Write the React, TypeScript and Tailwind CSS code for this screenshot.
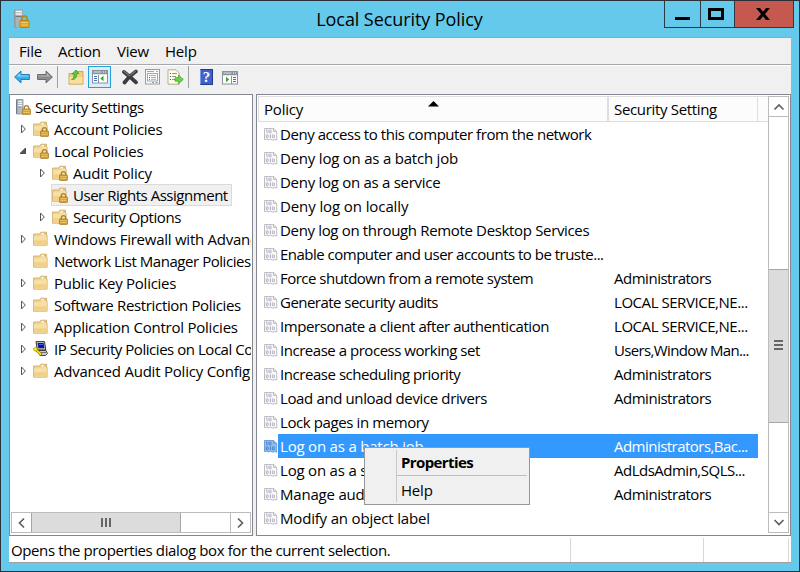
import React from "react";

type Row = { name: string; setting?: string; selected?: boolean; track: string; settingTrack?: string };
type Node = {
  label: string;
  depth: number;
  arrow?: "closed" | "open";
  icon: "server" | "folder" | "locked" | "ipsec";
  selected?: boolean;
  track: string;
};

const tree: Node[] = [
  { label: "Security Settings", depth: 0, icon: "server", track: "tracking-[-0.38px]" },
  { label: "Account Policies", depth: 1, arrow: "closed", icon: "locked", track: "tracking-[-0.27px]" },
  { label: "Local Policies", depth: 1, arrow: "open", icon: "locked", track: "tracking-[-0.2px]" },
  { label: "Audit Policy", depth: 2, arrow: "closed", icon: "locked", track: "tracking-[-0.2px]" },
  { label: "User Rights Assignment", depth: 2, icon: "locked", selected: true, track: "tracking-[-0.47px]" },
  { label: "Security Options", depth: 2, arrow: "closed", icon: "locked", track: "tracking-[-0.45px]" },
  { label: "Windows Firewall with Advanced Security", depth: 1, arrow: "closed", icon: "folder", track: "tracking-[-0.25px]" },
  { label: "Network List Manager Policies", depth: 1, icon: "folder", track: "tracking-[-0.45px]" },
  { label: "Public Key Policies", depth: 1, arrow: "closed", icon: "folder", track: "tracking-[-0.27px]" },
  { label: "Software Restriction Policies", depth: 1, arrow: "closed", icon: "folder", track: "tracking-[-0.34px]" },
  { label: "Application Control Policies", depth: 1, arrow: "closed", icon: "folder", track: "tracking-[-0.23px]" },
  { label: "IP Security Policies on Local Computer", depth: 1, arrow: "closed", icon: "ipsec", track: "tracking-[-0.46px]" },
  { label: "Advanced Audit Policy Configuration", depth: 1, arrow: "closed", icon: "folder", track: "tracking-[-0.22px]" },
];

const rows: Row[] = [
  { name: "Deny access to this computer from the network", track: "tracking-[-0.45px]" },
  { name: "Deny log on as a batch job", track: "tracking-[-0.22px]" },
  { name: "Deny log on as a service", track: "tracking-[-0.28px]" },
  { name: "Deny log on locally", track: "tracking-[-0.1px]" },
  { name: "Deny log on through Remote Desktop Services", track: "tracking-[-0.34px]" },
  { name: "Enable computer and user accounts to be truste...", track: "tracking-[-0.51px]" },
  { name: "Force shutdown from a remote system", setting: "Administrators", track: "tracking-[-0.51px]", settingTrack: "tracking-[-0.48px]" },
  { name: "Generate security audits", setting: "LOCAL SERVICE,NE...", track: "tracking-[-0.53px]", settingTrack: "tracking-[-0.45px]" },
  { name: "Impersonate a client after authentication", setting: "LOCAL SERVICE,NE...", track: "tracking-[-0.41px]", settingTrack: "tracking-[-0.45px]" },
  { name: "Increase a process working set", setting: "Users,Window Man...", track: "tracking-[-0.47px]", settingTrack: "tracking-[-0.64px]" },
  { name: "Increase scheduling priority", setting: "Administrators", track: "tracking-[-0.45px]", settingTrack: "tracking-[-0.48px]" },
  { name: "Load and unload device drivers", setting: "Administrators", track: "tracking-[-0.37px]", settingTrack: "tracking-[-0.48px]" },
  { name: "Lock pages in memory", track: "tracking-[-0.4px]" },
  { name: "Log on as a batch job", setting: "Administrators,Bac...", selected: true, track: "tracking-[-0.2px]", settingTrack: "tracking-[-0.53px]" },
  { name: "Log on as a service", setting: "AdLdsAdmin,SQLS...", track: "tracking-[-0.2px]", settingTrack: "tracking-[-0.5px]" },
  { name: "Manage auditing and security log", setting: "Administrators", track: "tracking-[-0.2px]", settingTrack: "tracking-[-0.48px]" },
  { name: "Modify an object label", track: "tracking-[-0.18px]" },
];

function Lock() {
  return (
    <g>
      <path d="M9.300 10.500V9a2.200 2.400 0 0 1 4.400 0v1.500" fill="none" stroke="#a88234" strokeWidth="1.400" />
      <rect x="7.500" y="10" width="8" height="5.400" rx="0.600" fill="#d3a136" stroke="#ad7d22" strokeWidth="0.800" />
      <path d="M8.300 11.600h6.400M8.300 13.500h6.400" stroke="#f0cf78" strokeWidth="0.700" />
    </g>
  );
}

function FolderShape() {
  return (
    <g>
      <path d="M.6 3h6.200l1-1.800h5.700v3h.6v10H.6z" fill="#f0d492" stroke="#cda661" strokeWidth="0.800" />
      <path d="M8.500 2.200h4.200v1.100H8.500z" fill="#fff" />
      <path d="M11.200 2.200h1.600v1h-1.600z" fill="#6aa5cf" />
      <path d="M1 5.200h6.800l1.200-1h4.600v9.500H1z" fill="#f7e0a5" />
      <path d="M1 9.200h12.600v4.500H1z" fill="#f1d18a" />
    </g>
  );
}

function TreeIcon({ kind }: { kind: Node["icon"] }) {
  return (
    <svg width="16" height="16" viewBox="0 0 16 16" className="shrink-0">
      {kind === "server" && (
        <g>
          <path d="M1.500.5h6.500v14.500h-6.500z" fill="#b4bcc2" stroke="#87929a" strokeWidth="0.800" />
          <path d="M1 .8h1.300v14H1z" fill="#6f7d88" />
          <path d="M3.200 2.500h4M3.200 4.500h4M3.200 6.500h4" stroke="#f3f6f8" strokeWidth="1" />
          <path d="M3.500 8.500h2" stroke="#63ba52" strokeWidth="1" />
          <Lock />
        </g>
      )}
      {(kind === "folder" || kind === "locked") && <FolderShape />}
      {kind === "locked" && <Lock />}
      {kind === "ipsec" && (
        <g>
          <path d="M3 .6h8.500l1.300 8.400H4.300z" fill="#c6c6c6" stroke="#222" strokeWidth="0.900" />
          <path d="M4.600 2h6l.8 5.200H5.500z" fill="#10109a" />
          <path d="M6 3.500h4" stroke="#3c62ff" strokeWidth="1" />
          <path d="M5 9.500h8l1.500 3-2 2H7z" fill="#c9c9c9" stroke="#333" strokeWidth="0.900" />
          <path d="M8 11.500h5" stroke="#666" strokeWidth="0.900" />
          <path d="M2.500 8l5.800 6" stroke="#756c00" strokeWidth="2.600" />
          <path d="M2 7.500l6 6.200" stroke="#f8ed00" strokeWidth="1.700" />
          <path d="M.5 7.500l2-1.300 2 1.300-.3 2-2 .7-1.500-1z" fill="#f8ed00" stroke="#8a8200" strokeWidth="0.500" />
        </g>
      )}
    </svg>
  );
}

function PolicyIcon({ selected }: { selected?: boolean }) {
  const line = selected ? "#6f9fd4" : "#bcbcc2";
  const ink = selected ? "#3f78bb" : "#a3a0b6";
  return (
    <svg width="14" height="16" viewBox="0 0 14 16" className="shrink-0">
      <path
        d="M.5 2.500h9l3.200 3v8.700l-2-.8-1.800.8-2.500-1-2 .7-2-.7-1.900.5z"
        fill={selected ? "#8fc0f2" : "#fbfbfb"}
        stroke={line}
      />
      <path d="M9.500 2.500v3h3.200" fill="none" stroke={line} />
      <path d="M3 3.700v3.600M2.200 4.200H3" stroke={ink} strokeWidth="0.900" fill="none" />
      <rect x="5" y="4" width="2" height="3" rx="0.800" fill="none" stroke={ink} strokeWidth="0.900" />
      <rect x="2.200" y="8.800" width="2" height="3" rx="0.800" fill="none" stroke={ink} strokeWidth="0.900" />
      <path d="M6.400 8.400v3.800" stroke={ink} strokeWidth="0.900" />
      <rect x="8.400" y="8.800" width="2" height="3" rx="0.800" fill="none" stroke={ink} strokeWidth="0.900" />
    </svg>
  );
}

function Arrow({ kind }: { kind?: "closed" | "open" }) {
  return (
    <svg width="8" height="10" viewBox="0 0 8 10" className="mr-[4px] shrink-0">
      {kind === "closed" && <path d="M1.500 1v8L5.300 5z" fill="#fff" stroke="#555" strokeWidth="1" />}
      {kind === "open" && <path d="M5.500 2v5.500H0z" fill="#555" stroke="#333" strokeWidth="0.800" />}
    </svg>
  );
}

function Chevron({ d }: { d: string }) {
  return (
    <svg width="12" height="12" viewBox="0 0 12 12">
      <path d={d} fill="none" stroke="#606060" strokeWidth="1.700" />
    </svg>
  );
}

function ConsoleIcon({ flip }: { flip?: boolean }) {
  return (
    <svg width="16" height="14" viewBox="0 0 16 14">
      <rect x=".5" y=".5" width="15" height="12.500" fill="#fff" stroke="#8a929b" />
      <path d="M1 1h14v3H1z" fill="#8793a0" />
      <path d="M1.500 2h8" stroke="#dce3ea" />
      <path d="M11 2h1M13 2h1" stroke="#fff" />
      <path d="M1 4.500h14" stroke="#dfe3e7" />
      {flip ? (
        <g>
          <path d="M9.500 5v8" stroke="#8a929b" />
          <path d="M11 6.500h3M11 8.500h3M11 10.500h3" stroke="#3f73b5" />
          <path d="M4 5.800v5.400L7.200 8.500z" fill="#31a51d" />
        </g>
      ) : (
        <g>
          <path d="M6.500 5v8" stroke="#8a929b" />
          <path d="M2 6.500h3M2 8.500h3M2 10.500h3" stroke="#3f73b5" />
          <path d="M11.500 5.800v5.400L8.300 8.500z" fill="#31a51d" />
        </g>
      )}
    </svg>
  );
}

function Toolbar() {
  return (
    <div className="flex h-[29px] items-center border-t border-white bg-[#f0f0f0] pb-[6px] pl-[5px]">
      <svg width="16" height="14" viewBox="0 0 16 14">
        <path d="M.6 7L7 1v3.500h8.400v5H7V13z" fill="#38aee9" stroke="#1a74b4" strokeWidth="0.900" />
        <path d="M2.500 6.600L6.300 3v2.400h8.200v1.200z" fill="#8ed8f8" />
      </svg>
      <svg width="16" height="14" viewBox="0 0 16 14" className="ml-[7px]">
        <path d="M15.400 7L9 1v3.500H.6v5H9V13z" fill="#8b8b8b" stroke="#626262" strokeWidth="0.900" />
        <path d="M13.500 6.600L9.700 3v2.400H1.500v1.200z" fill="#b5b5b5" />
      </svg>
      <div className="ml-[4px] h-[22px] w-px bg-[#a0a0a0]" />
      <svg width="16" height="16" viewBox="0 0 16 16" className="ml-[10px]">
        <path d="M1 4.500h7l1.200-2H15v12.700H1z" fill="#f0cf7e" stroke="#c49b49" strokeWidth="0.800" />
        <path d="M1.500 8h13v6.500h-13z" fill="#f7dfa0" />
        <path d="M3.500 10.500C5.500 10 6.200 7.500 6 5H3.800L8 1l3 3.500H8.800C9 8.500 7 11 3.500 10.500z" fill="#5cc93a" stroke="#2f8f1b" strokeWidth="0.600" />
      </svg>
      <div className="ml-[4px] flex h-[22px] w-[23px] items-center justify-center border border-[#26a0da] bg-[#d9eef9]">
        <ConsoleIcon />
      </div>
      <svg width="18" height="16" viewBox="0 0 18 16" className="ml-[10px]">
        <path d="M3 3c4 3 8 6.500 12 10.300M14.800 2.500C11 5 6.500 9.500 3.500 13.500" stroke="#3c3c3c" strokeWidth="3.800" strokeLinecap="round" fill="none" />
        <path d="M3 2.600c2 1.200 4 3 5.500 4.300M14.300 2.200L10 5.800" stroke="#777" strokeWidth="1.200" strokeLinecap="round" fill="none" />
      </svg>
      <svg width="15" height="16" viewBox="0 0 15 16" className="ml-[6px]">
        <rect x=".5" y=".5" width="14" height="14.500" fill="#fafafa" stroke="#9a9a9a" />
        <path d="M2 2.500h7M11 2.500h2" stroke="#9fa8b0" />
        <rect x="2.500" y="4.500" width="10" height="7.500" fill="#fff" stroke="#9ba9b6" />
        <path d="M4 6.500h7M6 8.500h5M6 10.300h5" stroke="#95a7b8" strokeWidth="0.900" />
        <path d="M4 8.500h1M4 10.300h1" stroke="#2c7ed0" />
        <path d="M7 13.500h2M10.500 13.500h2" stroke="#999" />
      </svg>
      <svg width="17" height="16" viewBox="0 0 17 16" className="ml-[7px]">
        <path d="M1 .8h8l3.200 3.200v11.200H1z" fill="#fffbe9" stroke="#aaa48e" strokeWidth="0.900" />
        <path d="M3 4.500h1M3 7.500h1M3 10.500h1" stroke="#555" />
        <path d="M5 4.500h5M5 7.500h4M5 10.500h4" stroke="#8d93ad" />
        <path d="M8 8.700h3.500V6L16.300 10.400 11.500 14.800v-2.600H8z" fill="#6ed044" stroke="#43a326" strokeWidth="0.700" />
      </svg>
      <div className="ml-[4px] h-[22px] w-px bg-[#a0a0a0]" />
      <div className="ml-[11px] flex h-[16px] w-[13px] items-center justify-center border border-[#22388e] border-l-[#7e98e8] bg-[#4061cb] font-['Liberation_Serif',serif] text-[15px] leading-none font-bold text-white">
        ?
      </div>
      <div className="ml-[9px] pt-[2px]">
        <ConsoleIcon flip />
      </div>
    </div>
  );
}

export default function App() {
  return (
    <div className="relative flex h-[572px] w-[800px] flex-col overflow-hidden border border-[#2d3038] bg-[#64c9eb] font-['Open_Sans','Noto_Sans',sans-serif] text-[15px] tracking-[-0.2px] text-black">
      <header className="relative flex h-[36px] shrink-0 items-center justify-center pr-[1px]">
        <svg width="18" height="20" viewBox="0 0 18 20" className="absolute top-[8px] left-[12px]">
          <path d="M1 1l8-.5 1 1V17l-8 2-1-1z" fill="#8e999f" />
          <path d="M2.500 1.500H9.500V18H2.500z" fill="#a9b3b8" />
          <path d="M2.500 2.500H9M2.500 5H9" stroke="#f2f5f6" strokeWidth="1.400" />
          <path d="M2.500 7.500H9" stroke="#717b82" />
          <path d="M8.800 12V9.800a2.700 2.700 0 0 1 5.400 0V12" fill="none" stroke="#b5861c" strokeWidth="1.600" />
          <rect x="7" y="11.500" width="9" height="7" rx=".6" fill="#e0a624" stroke="#aa7812" strokeWidth="0.800" />
          <path d="M7.500 13.500h8M7.500 16h8" stroke="#f5cf62" strokeWidth="0.800" />
        </svg>
        <h1 className="text-[18px] leading-none tracking-[-0.08px]">Local Security Policy</h1>
        <div className="absolute top-[-1px] right-[5px] flex h-[28px] border border-[#2d3944]">
          <div className="flex w-[36px] items-center justify-center border-r border-[#2d3944]">
            <span className="mt-[9px] mr-px h-[3px] w-[15px] bg-black" />
          </div>
          <div className="flex w-[33px] items-center justify-center">
            <span className="mr-[3px] h-[12px] w-[16px] border-[3px] border-black" />
          </div>
          <div className="flex w-[59px] items-center justify-center border-l border-[#2d3944] bg-[#c5594f]">
            <svg width="14" height="12" viewBox="0 0 14 12" className="mr-[3px]">
              <path d="M0 0h4l3 3.800L10 0h4L9 6l5 6h-4L7 8.200 4 12H0l5-6z" fill="#000" />
            </svg>
          </div>
        </div>
      </header>

      <main className="mx-[8px] flex h-[525px] w-[782px] shrink-0 flex-col border-t border-[#8fa8b4] bg-[#f0f0f0]">
        <nav className="flex h-[27px] shrink-0 items-center border-b border-[#a6a8ad] pl-[10px]">
          <span className="w-[39px]">File</span>
          <span className="w-[59px]">Action</span>
          <span className="w-[48px]">View</span>
          <span>Help</span>
        </nav>
        <Toolbar />

        <div className="flex h-[442px] shrink-0 gap-[3px]">
          <section className="flex w-[244px] flex-col overflow-hidden border border-[#828790] bg-white">
            <ul className="mr-px flex-1 overflow-hidden pt-px">
              {tree.map((n) => (
                <li
                  key={n.label}
                  className={`flex h-[22px] items-center whitespace-nowrap ${
                    n.depth === 0 ? "pl-[4px]" : n.depth === 1 ? "pl-[10px]" : "pl-[29px]"
                  }`}
                >
                  {n.depth > 0 && <Arrow kind={n.arrow} />}
                  <span
                    className={`flex h-[22px] items-center border pr-[3px] ${n.depth === 0 ? "gap-[4px]" : "gap-[5px]"} ${
                      n.selected ? "border-[#dadada] bg-[#f0f0f0]" : "border-transparent"
                    }`}
                  >
                    <TreeIcon kind={n.icon} />
                    <span className={n.track}>{n.label}</span>
                  </span>
                </li>
              ))}
            </ul>
            <div className="mx-[1px] mb-[2px] flex h-[21px] border border-[#bcbcbc]">
              <div className="flex w-[19px] items-center justify-center">
                <Chevron d="M8 1.500L3.500 6 8 10.500" />
              </div>
              <div className="flex w-[150px] items-center justify-center gap-[2px] border-x border-[#a6a6a6] bg-[#dcdcdc]">
                <span className="h-[9px] w-[2px] bg-[#666]" />
                <span className="h-[9px] w-[2px] bg-[#666]" />
                <span className="h-[9px] w-[2px] bg-[#666]" />
              </div>
              <div className="flex-1" />
              <div className="flex w-[20px] items-center justify-center border-l border-[#bcbcbc]">
                <Chevron d="M3 1.500L7.500 6 3 10.500" />
              </div>
            </div>
          </section>

          <section className="flex w-[535px] overflow-hidden border border-[#828790] bg-white pt-[1px]">
            <div className="flex w-[511px] flex-col">
              <div className="ml-[1px] flex h-[26px] shrink-0 border-t border-b border-l border-[#dedede] bg-[#fcfcfc]">
                <div className="relative flex w-[350px] items-center border-r-2 border-[#dedede] pl-[5px]">
                  Policy
                  <svg width="11" height="6" viewBox="0 0 11 6" className="absolute top-[4px] left-[169px]">
                    <path d="M5.500 0L11 5.500H0z" fill="#000" />
                  </svg>
                </div>
                <div className="flex w-[149px] items-center border-r border-[#dedede] pl-[5px] tracking-[-0.33px]">
                  Security Setting
                </div>
              </div>
              <ul>
                {rows.map((r) => (
                  <li key={r.name} className="flex h-[24px] items-center pl-[7px] whitespace-nowrap">
                    <PolicyIcon selected={r.selected} />
                    <div
                      className={`flex h-[24px] w-[480px] items-center pl-[2px] ${
                        r.selected ? "bg-[#3399ff] text-white" : ""
                      }`}
                    >
                      <span className="w-[334px]">
                        <span className={r.track}>{r.name}</span>
                      </span>
                      <span className={r.settingTrack}>{r.setting}</span>
                    </div>
                  </li>
                ))}
              </ul>
            </div>
            <div className="flex h-[437px] w-[21px] flex-col border border-[#bcbcbc]">
              <div className="flex h-[20px] items-center justify-center border-b border-[#bcbcbc]">
                <Chevron d="M1.500 8.500L6 4 10.500 8.500" />
              </div>
              <div className="h-[152px]" />
              <div className="flex h-[154px] flex-col items-center justify-center gap-[2px] border-y border-[#a6a6a6] bg-[#dcdcdc] pb-[2px]">
                <span className="h-[2px] w-[9px] bg-[#666]" />
                <span className="h-[2px] w-[9px] bg-[#666]" />
                <span className="h-[2px] w-[9px] bg-[#666]" />
              </div>
              <div className="flex-1" />
              <div className="flex h-[20px] items-center justify-center border-t border-[#bcbcbc]">
                <Chevron d="M1.500 3L6 7.500 10.500 3" />
              </div>
            </div>
          </section>
        </div>

        <footer className="flex flex-1 items-stretch border-b border-[#a0a0a0] bg-white pt-[2px]">
          <div className="flex w-[562px] items-center border-r border-[#d7d7d7] pt-px pl-[2px] tracking-[-0.39px]">
            Opens the properties dialog box for the current selection.
          </div>
          <div className="w-[133px] border-r border-[#d7d7d7]" />
          <div className="w-[85px] border-r border-[#d7d7d7]" />
        </footer>
      </main>

      <div className="absolute top-[446px] left-[363px] flex h-[58px] w-[166px] border border-[#979797] bg-[#f0f0f0] py-[2px] pr-[2px]">
        <div className="w-[32px] border-r border-[#c9c9c9]" />
        <div className="flex flex-1 flex-col">
          <div className="flex h-[26px] items-center border-b border-[#bdbdbd] pl-[4px] font-bold tracking-[-0.6px]">
            Properties
          </div>
          <div className="flex flex-1 items-center pt-[2px] pl-[4px]">Help</div>
        </div>
      </div>
    </div>
  );
}
